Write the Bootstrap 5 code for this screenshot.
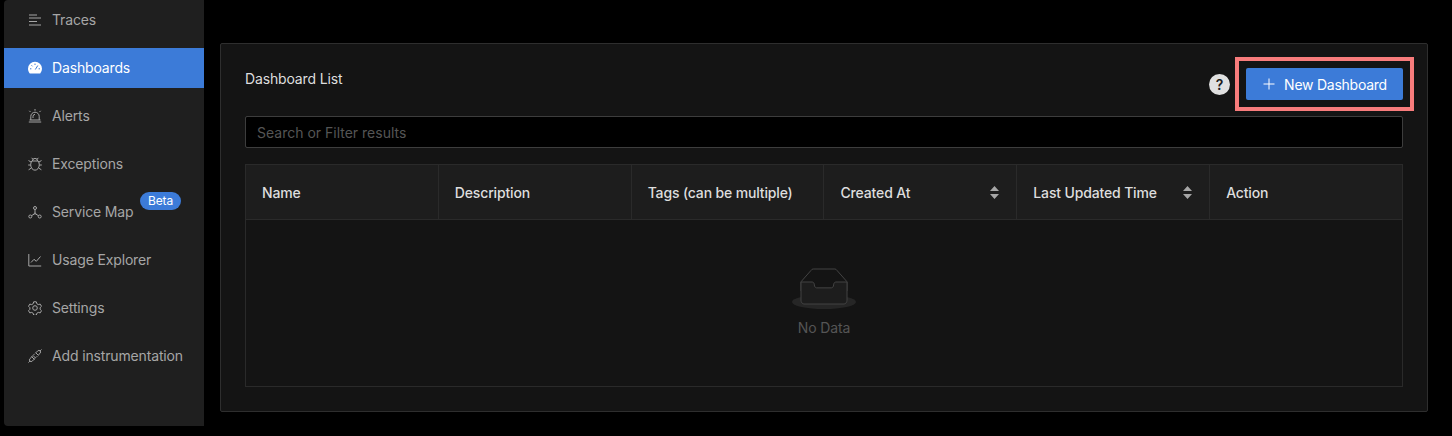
<!DOCTYPE html>
<html lang="en">
<head>
  <meta charset="UTF-8">
  <meta name="viewport" content="width=device-width, initial-scale=1.0">
  <title>Dashboards</title>

  <link href="https://cdn.jsdelivr.net/npm/bootstrap@5.3.0/dist/css/bootstrap.min.css" rel="stylesheet">

  <style>
    body {
      background-color: #000;
      font-family: Inter, "Liberation Sans", sans-serif;
      font-size: 14px;
      letter-spacing: -0.15px;
      overflow: hidden;
    }

    .page-wrap {
      width: 1452px;
      height: 436px;
    }

    .side-menu {
      width: 200px;
      height: 426px;
      margin-left: 4px;
      background-color: #1f1f1f;
      border-top-left-radius: 4px;
      border-bottom-left-radius: 4px;
    }

    .side-item {
      height: 40px;
      padding-left: 24px;
      padding-bottom: 1px;
      margin-bottom: 8px;
      color: #a6a6a6;
      gap: 10px;
    }

    .side-item svg {
      flex: none;
      width: 14px;
      height: 14px;
      fill: none;
      stroke: currentColor;
      stroke-width: 1;
    }

    .side-active {
      background-color: #3c7bd8;
      color: #fff;
    }

    .beta-tag {
      position: absolute;
      left: 136px;
      top: 0;
      width: 41px;
      height: 18px;
      border-radius: 9px;
      background-color: #3c7bd8;
      color: #fff;
      font-size: 12px;
      line-height: 18px;
      text-align: center;
    }

    .main-pane {
      width: 1208px;
      margin: 43px 0 0 16px;
    }

    .list-box {
      height: 369px;
      padding: 24px;
      background-color: #141414;
      border: 1px solid #2e2e2e;
      border-radius: 2px;
      color: #dedede;
    }

    .help-dot {
      width: 21px;
      height: 21px;
      background-color: #e0e0e0;
      color: #1c1c1c;
      font-size: 14px;
      font-weight: 600;
    }

    .btn-frame {
      margin: -11px;
      padding: 7px;
      border: 4px solid #f87c7c;
    }

    .new-btn {
      width: 157px;
      height: 32px;
      padding: 0;
      gap: 8px;
      background-color: #3c7bd8;
      border: 0;
      border-radius: 2px;
      color: #fff;
      font-size: 14px;
      letter-spacing: -0.25px;
    }

    .search-box {
      height: 32px;
      margin: 16px 0;
      padding: 4px 11px;
      background-color: #000;
      border: 1px solid #3d3d3d;
      border-radius: 2px;
      color: #dedede;
      font-size: 14px;
    }

    .search-box::placeholder {
      color: #555;
    }

    .search-box:focus {
      background-color: #000;
      border-color: #3d3d3d;
      color: #dedede;
      box-shadow: none;
    }

    .data-table {
      table-layout: fixed;
      margin: 0;
      --bs-table-bg: transparent;
      --bs-table-color: #dedede;
      border: 1px solid #2a2a2a;
    }

    .data-table th {
      height: 55px;
      padding: 0 16px;
      vertical-align: middle;
      background-color: #1d1d1d;
      color: #dedede;
      font-weight: 500;
      border-bottom: 1px solid #2a2a2a;
      border-right: 1px solid #2a2a2a;
    }

    .data-table th:last-child {
      border-right: 0;
    }

    .data-table td {
      height: 167px;
      padding: 0;
      text-align: center;
      vertical-align: middle;
      border: 0;
    }

    .sort-arrows {
      display: block;
      width: 9px;
      height: 13px;
      margin-right: 1px;
    }

    .empty-text {
      margin-top: 8px;
      color: #555;
    }
  </style>
</head>
<body>
  <div class="page-wrap d-flex">
    <nav class="side-menu">
      <div class="side-item d-flex align-items-center">
        <svg viewBox="0 0 14 14"><path d="M1 2h8M1 5h12M1 8.500h8M1 12h12"/></svg>
        <span>Traces</span>
      </div>
      <div class="side-item side-active d-flex align-items-center">
        <svg viewBox="0 0 14 14"><path d="M7 .8a7 7 0 0 0-7 7c0 1.800.7 3.500 1.800 4.700h10.400A7 7 0 0 0 14 7.800a7 7 0 0 0-7-7z" fill="#fff" stroke="none"/><path d="M7 2.600v1.400M2 7.800h1.400M10.600 7.800H12M3.500 4.300l1 1M9.800 4.500 7.300 8.500" stroke="#3c7bd8"/></svg>
        <span>Dashboards</span>
      </div>
      <div class="side-item d-flex align-items-center">
        <svg viewBox="0 0 14 14"><path d="M2.800 11V7.400a4.200 4.200 0 0 1 8.400 0V11M.8 13h12.400M1.500 11h11M7 0v1.700M1.300 1.800l1.200 1.200M12.700 1.800l-1.200 1.200M5 9V7.400a2 2 0 0 1 2-2"/></svg>
        <span>Alerts</span>
      </div>
      <div class="side-item d-flex align-items-center">
        <svg viewBox="0 0 14 14"><path d="M3.800 4h6.400c.7 1 1.100 2.400 1.100 3.800 0 2.900-1.900 5.400-4.300 5.400s-4.300-2.500-4.300-5.400C2.700 6.400 3.100 5 3.800 4zM4.400 4a2.600 2.600 0 0 1 5.200 0M3.600.8 5 2.300M10.400.8 9 2.300M.5 3.500l2.800 1.700M13.500 3.500l-2.800 1.700M.2 8h2.500M11.300 8h2.500M.6 12.800l2.800-1.800M13.400 12.800l-2.800-1.800"/></svg>
        <span>Exceptions</span>
      </div>
      <div class="position-relative">
        <div class="side-item d-flex align-items-center">
          <svg viewBox="0 0 14 14"><circle cx="7" cy="3" r="1.500"/><circle cx="2.300" cy="11.500" r="1.500"/><circle cx="11.700" cy="11.500" r="1.500"/><circle cx="7" cy="8.500" r=".7"/><path d="M7 4.500v3.400M6.400 9 3.500 10.700M7.600 9l2.900 1.700"/></svg>
          <span>Service Map</span>
        </div>
        <span class="beta-tag">Beta</span>
      </div>
      <div class="side-item d-flex align-items-center">
        <svg viewBox="0 0 14 14"><path d="M.8 1v12h12.400M3 9.500l3-3.200 2.300 2L12.500 3.500"/></svg>
        <span>Usage Explorer</span>
      </div>
      <div class="side-item d-flex align-items-center">
        <svg viewBox="0 0 14 14"><circle cx="7" cy="7" r="2.300"/><path d="M5.700.8h2.600l.5 1.900 1.500.9 1.900-.5 1.300 2.200-1.400 1.400v1.600l1.400 1.400-1.300 2.200-1.900-.5-1.500.9-.5 1.900H5.700l-.5-1.900-1.500-.9-1.900.5L.5 9.700l1.400-1.400V6.700L.5 5.300l1.300-2.200 1.900.5 1.500-.9z"/></svg>
        <span>Settings</span>
      </div>
      <div class="side-item d-flex align-items-center">
        <svg viewBox="0 0 14 14"><path d="M7.800 3.800l1.900-1.900a1.800 1.800 0 0 1 2.400 0 1.800 1.800 0 0 1 0 2.400l-1.900 1.900zM6.200 10.200l-1.900 1.900a1.800 1.800 0 0 1-2.400 0 1.800 1.800 0 0 1 0-2.400l1.900-1.900zM3.800 7.800 5 6.500 7.500 9l-1.300 1.200zM7.800 3.800l2.400 2.400M12.100 1.900 13.500.5M1.900 12.100.5 13.500M5.600 5.900l1.200-1.200M8.100 8.400l1.200-1.200"/></svg>
        <span>Add instrumentation</span>
      </div>
    </nav>

    <main class="main-pane">
      <div class="list-box">
        <div class="d-flex justify-content-between">
          <div>Dashboard List</div>
          <div class="d-flex align-items-center gap-3">
            <span class="help-dot rounded-circle d-flex align-items-center justify-content-center">?</span>
            <div class="btn-frame">
              <button type="button" class="new-btn d-flex align-items-center justify-content-center">
                <svg width="14" height="14" viewBox="0 0 14 14" fill="none" stroke="currentColor"><path d="M7 1.500v11M1.500 7h11"/></svg>
                <span>New Dashboard</span>
              </button>
            </div>
          </div>
        </div>

        <input class="form-control search-box" type="text" placeholder="Search or Filter results">

        <table class="table data-table">
          <thead>
            <tr>
              <th>Name</th>
              <th>Description</th>
              <th>Tags (can be multiple)</th>
              <th>
                <div class="d-flex justify-content-between align-items-center">
                  <span>Created At</span>
                  <svg class="sort-arrows" viewBox="0 0 9 13" fill="#a6a6a6"><path d="M4.500 0 9 5H0zM0 8h9l-4.500 5z"/></svg>
                </div>
              </th>
              <th>
                <div class="d-flex justify-content-between align-items-center">
                  <span>Last Updated Time</span>
                  <svg class="sort-arrows" viewBox="0 0 9 13" fill="#a6a6a6"><path d="M4.500 0 9 5H0zM0 8h9l-4.500 5z"/></svg>
                </div>
              </th>
              <th>Action</th>
            </tr>
          </thead>
          <tbody>
            <tr>
              <td colspan="6">
                <svg width="64" height="41" viewBox="0 0 64 41" class="d-block mx-auto">
                  <g transform="translate(0 1)" fill="none" fill-rule="evenodd">
                    <ellipse fill="#262626" cx="32" cy="33" rx="32" ry="7"/>
                    <g fill-rule="nonzero" stroke="#434343">
                      <path d="M55 12.760L44.854 1.258C44.367.474 43.656 0 42.907 0H21.093c-.749 0-1.460.474-1.947 1.257L9 12.761V22h46v-9.240z"/>
                      <path d="M41.613 15.931c0-1.605.994-2.930 2.227-2.931H55v18.137C55 33.260 53.680 35 52.050 35h-40.100C10.320 35 9 33.259 9 31.137V13h11.160c1.233 0 2.227 1.323 2.227 2.928v.022c0 1.605 1.005 2.901 2.237 2.901h14.752c1.232 0 2.237-1.308 2.237-2.913v-.007z" fill="#1d1d1d"/>
                    </g>
                  </g>
                </svg>
                <div class="empty-text">No Data</div>
              </td>
            </tr>
          </tbody>
        </table>
      </div>
    </main>
  </div>

  <script src="https://cdn.jsdelivr.net/npm/bootstrap@5.3.0/dist/js/bootstrap.bundle.min.js"></script>
</body>
</html>
